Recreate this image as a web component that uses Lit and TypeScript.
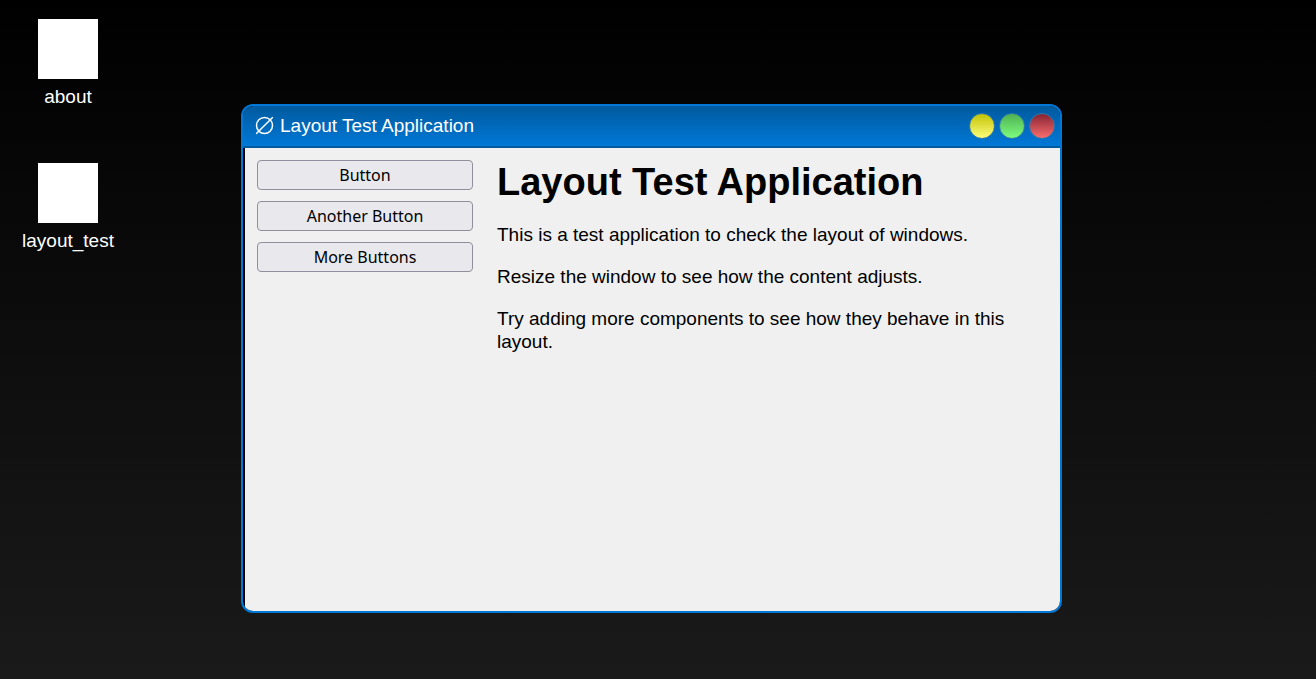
import { LitElement, html, css } from "lit";
import { customElement, property } from "lit/decorators.js";

@customElement("desktop-icon")
class DesktopIcon extends LitElement {
  static styles = css`
    .icon {
      display: flex;
      flex-direction: column;
      align-items: center;
      gap: 6px;
      width: 100%;
      padding: 0;
      border: 0;
      background: none;
      color: #fff;
      font: inherit;
      cursor: pointer;
    }
    .picture {
      width: 60px;
      height: 60px;
      background: #fff;
    }
  `;

  @property() label = "";

  render() {
    return html`
      <button class="icon" type="button">
        <span class="picture"></span>
        <span>${this.label}</span>
      </button>
    `;
  }
}

@customElement("app-window")
class AppWindow extends LitElement {
  static styles = css`
    :host {
      display: flex;
      flex-direction: column;
      box-sizing: border-box;
      border: 2px solid #0078d7;
      border-radius: 12px;
      background: #000;
      overflow: hidden;
    }
    .titlebar {
      display: flex;
      align-items: center;
      justify-content: space-between;
      height: 40px;
      padding: 0 5px 0 12px;
      border-bottom: 2px solid #005a9e;
      background: linear-gradient(#005a9e, #0078d7);
      color: #fff;
    }
    .title {
      display: flex;
      align-items: center;
      gap: 6px;
      padding-bottom: 2px;
    }
    .symbol {
      width: 19px;
      height: 20px;
      fill: none;
      stroke: currentColor;
      stroke-width: 1.5;
    }
    .controls {
      display: flex;
      gap: 4px;
    }
    .control {
      width: 26px;
      height: 26px;
      padding: 0;
      border: 1px solid #3478a8;
      border-radius: 50%;
      cursor: pointer;
    }
    .minimize {
      background: linear-gradient(#c0c000, #ffff80) border-box;
    }
    .maximize {
      background: linear-gradient(#4caf50, #80ff80) border-box;
    }
    .close {
      background: linear-gradient(#802030, #ff7070) border-box;
    }
    .body {
      flex: 1;
      margin-left: 2px;
      background: #f0f0f0;
      color: #000;
    }
  `;

  @property() heading = "";

  render() {
    return html`
      <header class="titlebar">
        <span class="title">
          <svg class="symbol" viewBox="0 0 19 20" aria-hidden="true">
            <circle cx="9.5" cy="10.5" r="8" />
            <path d="M1.2 18.8L17.8 2.2" />
          </svg>
          <span>${this.heading}</span>
        </span>
        <div class="controls">
          <button class="control minimize" type="button" aria-label="Minimize"></button>
          <button class="control maximize" type="button" aria-label="Maximize"></button>
          <button class="control close" type="button" aria-label="Close"></button>
        </div>
      </header>
      <div class="body"><slot></slot></div>
    `;
  }
}

@customElement("app-root")
class AppRoot extends LitElement {
  static styles = css`
    :host {
      display: block;
      position: relative;
      min-height: 100vh;
      overflow: hidden;
      background: linear-gradient(#000, #1a1a1a);
      font: 19px/23px "Liberation Sans", Arial, sans-serif;
    }
    .icons {
      display: flex;
      flex-direction: column;
      gap: 55px;
      width: 120px;
      padding: 19px 8px;
    }
    .window {
      position: absolute;
      left: 241px;
      top: 104px;
      width: 821px;
      height: 509px;
    }
    .layout {
      display: flex;
      gap: 24px;
      padding: 12px;
    }
    .sidebar {
      display: flex;
      flex-direction: column;
      flex: 0 0 216px;
      gap: 11px;
    }
    .action {
      padding: 3px 8px;
      border: 1px solid #8f8f9d;
      border-radius: 4px;
      background: #e9e9ed;
      color: #000;
      font: 16px/22px "Noto Sans", sans-serif;
    }
    .content {
      flex: 1;
    }
    h1 {
      margin: 0 0 19px;
      font-size: 38px;
      line-height: 44px;
    }
    p {
      margin: 0 0 19px;
    }
  `;

  render() {
    return html`
      <nav class="icons" aria-label="Desktop">
        ${["about", "layout_test"].map(
          (name) => html`<desktop-icon label=${name}></desktop-icon>`
        )}
      </nav>
      <app-window class="window" heading="Layout Test Application">
        <div class="layout">
          <div class="sidebar">
            ${["Button", "Another Button", "More Buttons"].map(
              (name) => html`<button class="action" type="button">${name}</button>`
            )}
          </div>
          <main class="content">
            <h1>Layout Test Application</h1>
            <p>This is a test application to check the layout of windows.</p>
            <p>Resize the window to see how the content adjusts.</p>
            <p>Try adding more components to see how they behave in this layout.</p>
          </main>
        </div>
      </app-window>
    `;
  }
}
